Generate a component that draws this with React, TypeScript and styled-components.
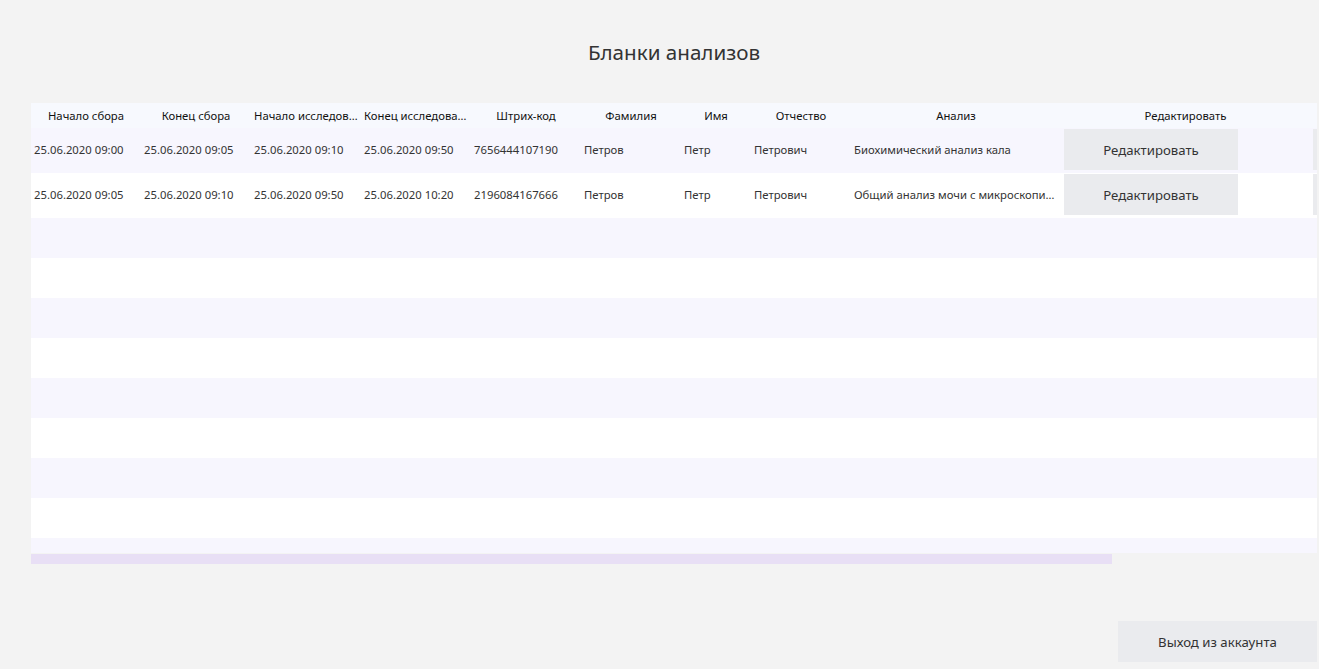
import React from "react";
import styled, { createGlobalStyle } from "styled-components";

const Global = createGlobalStyle`
  html, body { margin: 0; padding: 0; background: #f3f3f3; }
  body { font-family: "Noto Sans", "Open Sans", sans-serif; color: #333; }
`;

const Page = styled.div`
  width: 1319px;
  height: 669px;
  display: flex;
  flex-direction: column;
  box-sizing: border-box;
  padding: 0 2px 7px 31px;
  overflow: hidden;
`;

const Title = styled.h1`
  margin: 0;
  height: 103px;
  display: flex;
  align-items: center;
  justify-content: center;
  box-sizing: border-box;
  font-size: 20.6px;
  font-weight: 400;
  color: #333;
`;

const Grid = styled.div`
  height: 450px;
  overflow: hidden;
  display: flex;
  flex-direction: column;
`;

const cols = "110px 110px 110px 110px 110px 100px 70px 100px 210px 249px 30px";

const HeaderRow = styled.div`
  display: grid;
  grid-template-columns: ${cols};
  height: 25px;
  background: #f7f9fe;
  flex-shrink: 0;
`;

const HeaderCell = styled.div`
  font-size: 11.3px;
  color: #111;
  text-align: center;
  line-height: 25px;
  white-space: nowrap;
  overflow: hidden;
  text-overflow: ellipsis;
  padding: 0 3px;
`;

const Row = styled.div<{ $alt: boolean; $h: number }>`
  display: grid;
  grid-template-columns: ${cols};
  height: ${(p) => p.$h}px;
  flex-shrink: 0;
  background: ${(p) => (p.$alt ? "#f7f6fe" : "#ffffff")};
  align-items: center;
`;

const Cell = styled.div`
  font-size: 11.3px;
  color: #333;
  padding: 0 3px 2px;
  white-space: nowrap;
  overflow: hidden;
  text-overflow: ellipsis;
`;

const ButtonCell = styled.div`
  display: flex;
  padding: 0 0 2px 3px;
`;

const EditButton = styled.button`
  width: 174px;
  height: 41px;
  border: none;
  background: #eaebee;
  color: #333;
  font-family: inherit;
  font-size: 13.2px;
  padding: 0;
  cursor: pointer;
`;

const StubButton = styled.div`
  margin: 0 0 2px 3px;
  height: 41px;
  background: #eaebee;
`;

const ScrollTrack = styled.div`
  height: 10px;
  margin-top: 1px;
  display: flex;
`;

const ScrollThumb = styled.div`
  width: 1081px;
  background: #e8dff5;
`;

const Footer = styled.div`
  flex: 1;
  display: flex;
  justify-content: flex-end;
  align-items: flex-end;
`;

const LogoutButton = styled.button`
  width: 199px;
  height: 41px;
  border: none;
  background: #eaebee;
  color: #333;
  font-family: inherit;
  font-size: 13.2px;
  padding: 0;
  cursor: pointer;
`;

const headers = [
  "Начало сбора",
  "Конец сбора",
  "Начало исследования",
  "Конец исследования",
  "Штрих-код",
  "Фамилия",
  "Имя",
  "Отчество",
  "Анализ",
  "Редактировать",
  "",
];

const data = [
  [
    "25.06.2020 09:00",
    "25.06.2020 09:05",
    "25.06.2020 09:10",
    "25.06.2020 09:50",
    "7656444107190",
    "Петров",
    "Петр",
    "Петрович",
    "Биохимический анализ кала",
  ],
  [
    "25.06.2020 09:05",
    "25.06.2020 09:10",
    "25.06.2020 09:50",
    "25.06.2020 10:20",
    "2196084167666",
    "Петров",
    "Петр",
    "Петрович",
    "Общий анализ мочи с микроскопией осадка",
  ],
];

export default function App() {
  const empty = Array.from({ length: 9 }, (_, i) => i);
  return (
    <>
      <Global />
      <Page>
        <Title>Бланки анализов</Title>
        <Grid>
          <HeaderRow>
            {headers.map((h, i) => (
              <HeaderCell key={i}>{h}</HeaderCell>
            ))}
          </HeaderRow>
          {data.map((r, i) => (
            <Row key={i} $alt={i % 2 === 0} $h={45}>
              {r.map((c, j) => (
                <Cell key={j}>{c}</Cell>
              ))}
              <ButtonCell>
                <EditButton>Редактировать</EditButton>
              </ButtonCell>
              <StubButton />
            </Row>
          ))}
          {empty.map((i) => (
            <Row key={"e" + i} $alt={i % 2 === 0} $h={40} />
          ))}
        </Grid>
        <ScrollTrack>
          <ScrollThumb />
        </ScrollTrack>
        <Footer>
          <LogoutButton>Выход из аккаунта</LogoutButton>
        </Footer>
      </Page>
    </>
  );
}
